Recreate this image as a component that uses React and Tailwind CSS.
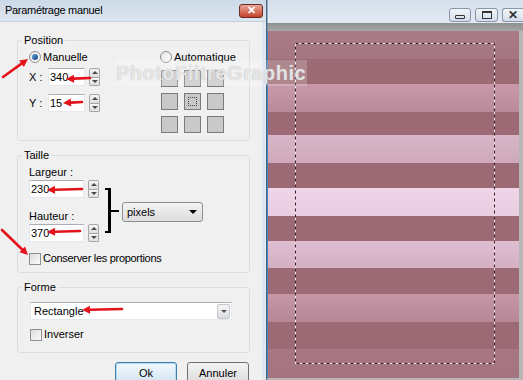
import React from "react";

const font = { fontFamily: '"Liberation Sans", Arial, sans-serif' };

function Spinner() {
    return (
        <div className="flex flex-col w-[11px] h-[18px]">
            <div className="flex-1 flex items-center justify-center border border-[#a6a6a6] rounded-t-[2px] bg-gradient-to-b from-[#f6f6f6] to-[#dedede]">
                <div className="w-0 h-0 border-x-[3px] border-x-transparent border-b-[3px] border-b-[#4a4a4a]" />
            </div>
            <div className="flex-1 flex items-center justify-center border border-t-0 border-[#a6a6a6] rounded-b-[2px] bg-gradient-to-b from-[#f6f6f6] to-[#dedede]">
                <div className="w-0 h-0 border-x-[3px] border-x-transparent border-t-[3px] border-t-[#4a4a4a]" />
            </div>
        </div>
    );
}

function NumberInput({value, width}) {
    return (
        <div className="flex items-center gap-[4px]">
            <div className={`${width} h-[18px] bg-white border border-[#e3e9ef] border-t-[#abadb3] flex items-center pl-[1px] text-[11px] text-black`}>
                {value}
            </div>
            <Spinner/>
        </div>
    );
}

function Radio({checked}) {
    return (
        <div className="w-[12px] h-[12px] rounded-full border border-[#8e8f8f] bg-gradient-to-br from-[#e6e6e6] to-[#fbfbfb] flex items-center justify-center">
            {checked ? <div className="w-[6px] h-[6px] rounded-full bg-gradient-to-br from-[#5fa3e0] to-[#12407e]"/> : null}
        </div>
    );
}

function Checkbox() {
    return <div className="w-[12px] h-[12px] border border-[#8e8f8f] bg-gradient-to-br from-[#dcdcdc] to-[#fcfcfc]"/>;
}

function GroupBox({title, className, children}) {
    return (
        <fieldset className={`ml-[17px] w-[233px] border border-[#d5dfe5] rounded-[3px] ${className}`}>
            <legend className="ml-[4px] px-[2px] text-[11px] leading-[16px] text-black">{title}</legend>
            {children}
        </fieldset>
    );
}

function Arrow({from, to}) {
    const [x1, y1] = from;
    const [x2, y2] = to;
    const len = Math.hypot(x2 - x1, y2 - y1);
    const ux = (x2 - x1) / len;
    const uy = (y2 - y1) / len;
    const bx = x2 - ux * 8;
    const by = y2 - uy * 8;
    const pts = `${x2},${y2} ${bx - uy * 4},${by + ux * 4} ${bx + uy * 4},${by - ux * 4}`;
    return (
        <g>
            <line x1={x1} y1={y1} x2={bx} y2={by} stroke="#e3121b" strokeWidth="2.6" strokeLinecap="round"/>
            <polygon points={pts} fill="#e3121b"/>
        </g>
    );
}

const stripes = [
    [28, "from-[#a87b85] to-[#a47682]"],
    [25, "from-[#9c6a74] to-[#9c6a74]"],
    [28, "from-[#c89aa9] to-[#b98a98]"],
    [23, "from-[#9c6a74] to-[#9c6a74]"],
    [28, "from-[#d8b6c7] to-[#cfa9bb]"],
    [25, "from-[#9c6a74] to-[#9c6a74]"],
    [28, "from-[#eed5e7] to-[#e8cde0]"],
    [25, "from-[#9c6a74] to-[#9c6a74]"],
    [27, "from-[#e0bed1] to-[#d5afc3]"],
    [26, "from-[#9c6a74] to-[#9c6a74]"],
    [28, "from-[#c698a7] to-[#b58694]"],
    [27, "from-[#9c6a74] to-[#9c6a74]"],
    [29, "from-[#a87782] to-[#a37380]"],
];

function WinButton({children, className}) {
    return (
        <div className={`h-[14px] rounded-[3px] border border-[#8797a8] bg-gradient-to-b from-[#f3f6fa] to-[#d3dde8] flex items-center justify-center ${className}`}>
            {children}
        </div>
    );
}

export default function App() {
    return (
        <div className="relative w-[523px] h-[380px] overflow-hidden flex bg-[#f0f0f0]" style={font}>
            {/* dialog */}
            <div className="w-[267px] h-full flex flex-col bg-[#dfe7f0] border-r border-[#4d6274]">
                <div className="h-[22px] shrink-0 flex items-center justify-between bg-gradient-to-b from-[#ccd9e7] to-[#dce6f1] border-b border-[#c4d0dc]">
                    <span className="pl-[5px] text-[11px] text-black tracking-[-0.3px]">Paramétrage manuel</span>
                    <div className="mr-[3px] w-[24px] h-[14px] rounded-[3px] border border-[#6d2a20] bg-gradient-to-b from-[#e8a596] to-[#c43f2b] flex items-center justify-center text-white text-[11px] font-bold leading-none">
                        ✕
                    </div>
                </div>
                <div className="flex-1 mr-[4px] bg-[#f0f0f0] pt-[10px] flex flex-col">
                    <GroupBox title="Position" className="pb-[7px]">
                        <div className="flex">
                            <div className="w-[142px] pl-[11px] flex flex-col">
                                <div className="mt-[1px] h-[16px] flex items-center gap-[2px] text-[11px] leading-[13px] text-black">
                                    <Radio checked/>
                                    <span>Manuelle</span>
                                </div>
                                <div className="mt-[3px] flex items-center">
                                    <span className="w-[19px] text-[11px] text-black">X :</span>
                                    <NumberInput value="340" width="w-[37px]"/>
                                </div>
                                <div className="mt-[8px] flex items-center">
                                    <span className="w-[19px] text-[11px] text-black">Y :</span>
                                    <NumberInput value="15" width="w-[37px]"/>
                                </div>
                            </div>
                            <div className="flex flex-col">
                                <div className="mt-[1px] h-[16px] flex items-center gap-[2px] text-[11px] leading-[13px] text-black">
                                    <Radio/>
                                    <span>Automatique</span>
                                </div>
                                <div className="mt-[5px] ml-[1px] grid grid-cols-3 gap-x-[6px] gap-y-[6px] w-[63px]">
                                    {[0, 1, 2, 3, 4, 5, 6, 7, 8].map((i) => (
                                        <div key={i} className="w-[17px] h-[17px] border border-[#7b7b7b] bg-[#c9c9c9] flex items-center justify-center">
                                            {i === 4 ? <div className="w-[9px] h-[9px] border border-dotted border-[#444]"/> : null}
                                        </div>
                                    ))}
                                </div>
                            </div>
                        </div>
                    </GroupBox>

                    <GroupBox title="Taille" className="mt-[6px] pb-[7px]">
                        <div className="flex pl-[11px]">
                            <div className="flex flex-col">
                                <span className="mt-[1px] h-[16px] text-[11px] leading-[16px] text-black">Largeur :</span>
                                <NumberInput value="230" width="w-[55px]"/>
                                <span className="mt-[10px] h-[16px] text-[11px] leading-[16px] text-black">Hauteur :</span>
                                <NumberInput value="370" width="w-[55px]"/>
                            </div>
                            <div className="mt-[25px] ml-[6px] h-[45px] flex items-center">
                                <div className="w-[6px] h-[45px] border-y-2 border-r-[3px] border-black"/>
                                <div className="w-[8px] h-[2px] bg-black"/>
                                <div className="ml-[3px] mt-[3px] w-[81px] h-[20px] rounded-[3px] border border-[#8e8f8f] bg-gradient-to-b from-[#f4f4f4] to-[#dcdcdc] flex items-center justify-between pl-[4px] pr-[5px] text-[11px] text-black">
                                    <span>pixels</span>
                                    <div className="w-0 h-0 border-x-[4px] border-x-transparent border-t-[4px] border-t-black"/>
                                </div>
                            </div>
                        </div>
                        <div className="mt-[10px] pl-[11px] h-[13px] flex items-center gap-[2px] text-[11px] text-black">
                            <Checkbox/>
                            <span className="tracking-[-0.3px]">Conserver les proportions</span>
                        </div>
                    </GroupBox>

                    <GroupBox title="Forme" className="mt-[6px] pb-[11px]">
                        <div className="mt-[7px] ml-[12px] w-[202px] h-[18px] bg-white border border-[#e3e9ef] border-t-[#abadb3] flex items-center justify-between pl-[3px] pr-[1px] text-[11px] text-black">
                            <span>Rectangle</span>
                            <div className="w-[13px] h-[15px] border border-[#c2c7cc] rounded-[2px] bg-gradient-to-b from-[#f4f4f4] to-[#dedede] flex items-center justify-center">
                                <div className="w-0 h-0 border-x-[3px] border-x-transparent border-t-[3px] border-t-[#555]"/>
                            </div>
                        </div>
                        <div className="mt-[8px] ml-[12px] h-[13px] flex items-center gap-[2px] text-[11px] text-black">
                            <Checkbox/>
                            <span>Inverser</span>
                        </div>
                    </GroupBox>

                    <div className="mt-[9px] ml-[115px] flex gap-[10px]">
                        <div className="w-[62px] h-[23px] rounded-[3px] border border-[#3c7fb1] bg-gradient-to-b from-[#f2f8fc] to-[#d0e4f2] shadow-[inset_0_0_0_1px_#b7dcf2] flex items-center justify-center text-[11px] text-black">Ok</div>
                        <div className="w-[62px] h-[23px] rounded-[3px] border border-[#707070] bg-gradient-to-b from-[#f4f4f4] to-[#dadada] flex items-center justify-center text-[11px] text-black">Annuler</div>
                    </div>
                </div>
            </div>

            {/* image window */}
            <div className="flex-1 flex flex-col bg-[#b6b6b6]">
                <div className="h-[23px] shrink-0 flex items-start justify-end gap-[4px] pt-[8px] bg-gradient-to-b from-[#d5e0ec] to-[#e3eaf3] border-l border-[#8fb1d2]">
                    <WinButton className="w-[22px] items-end pb-[2px]">
                        <div className="w-[10px] h-[4px] rounded-[1px] border border-[#333]"/>
                    </WinButton>
                    <WinButton className="w-[23px]">
                        <div className="w-[10px] h-[8px] border border-t-2 border-[#333]"/>
                    </WinButton>
                    <WinButton className="w-[21px] rounded-r-none border-r-0 text-[12px] font-bold text-[#333] leading-none">✕</WinButton>
                </div>
                <div className="h-[8px] shrink-0 bg-gradient-to-b from-[#8f8f8f] to-[#a6a6a6] border-l border-[#6a8fb5]"/>
                <div className="flex border-l border-[#3f87c9]">
                    <div className="relative w-[251px] flex flex-col">
                        {stripes.map(([h, c], i) => (
                            <div key={i} className={`bg-gradient-to-b ${c}`} style={{height: h}}/>
                        ))}
                        <svg className="absolute left-[27px] top-[12px]" width="200" height="321">
                            <rect x="0.5" y="0.5" width="199" height="320" fill="none" stroke="#f4e6ee" strokeWidth="1"/>
                            <rect x="0.5" y="0.5" width="199" height="320" fill="none" stroke="#3b1728" strokeWidth="1" strokeDasharray="3 3"/>
                        </svg>
                    </div>
                </div>
            </div>

            {/* watermark */}
            <div className="absolute left-[115px] top-[60px] w-[192px] h-[26px] bg-white/20 flex items-center justify-center pointer-events-none">
                <span className="text-[20px] leading-[16px] font-bold text-white/70 tracking-[0.5px] [text-shadow:0_0_1px_#a8a8a8]">PhotoFiltreGraphic</span>
            </div>

            {/* annotation arrows */}
            <svg className="absolute inset-0 pointer-events-none" width="523" height="380">
                <Arrow from={[3, 77]} to={[28, 59]}/>
                <Arrow from={[90, 78]} to={[66, 79]}/>
                <Arrow from={[82, 102]} to={[63, 103]}/>
                <Arrow from={[82, 189]} to={[47, 190]}/>
                <Arrow from={[80, 231]} to={[47, 232]}/>
                <Arrow from={[2, 230]} to={[28, 255]}/>
                <Arrow from={[122, 309]} to={[82, 310]}/>
            </svg>
        </div>
    );
}
